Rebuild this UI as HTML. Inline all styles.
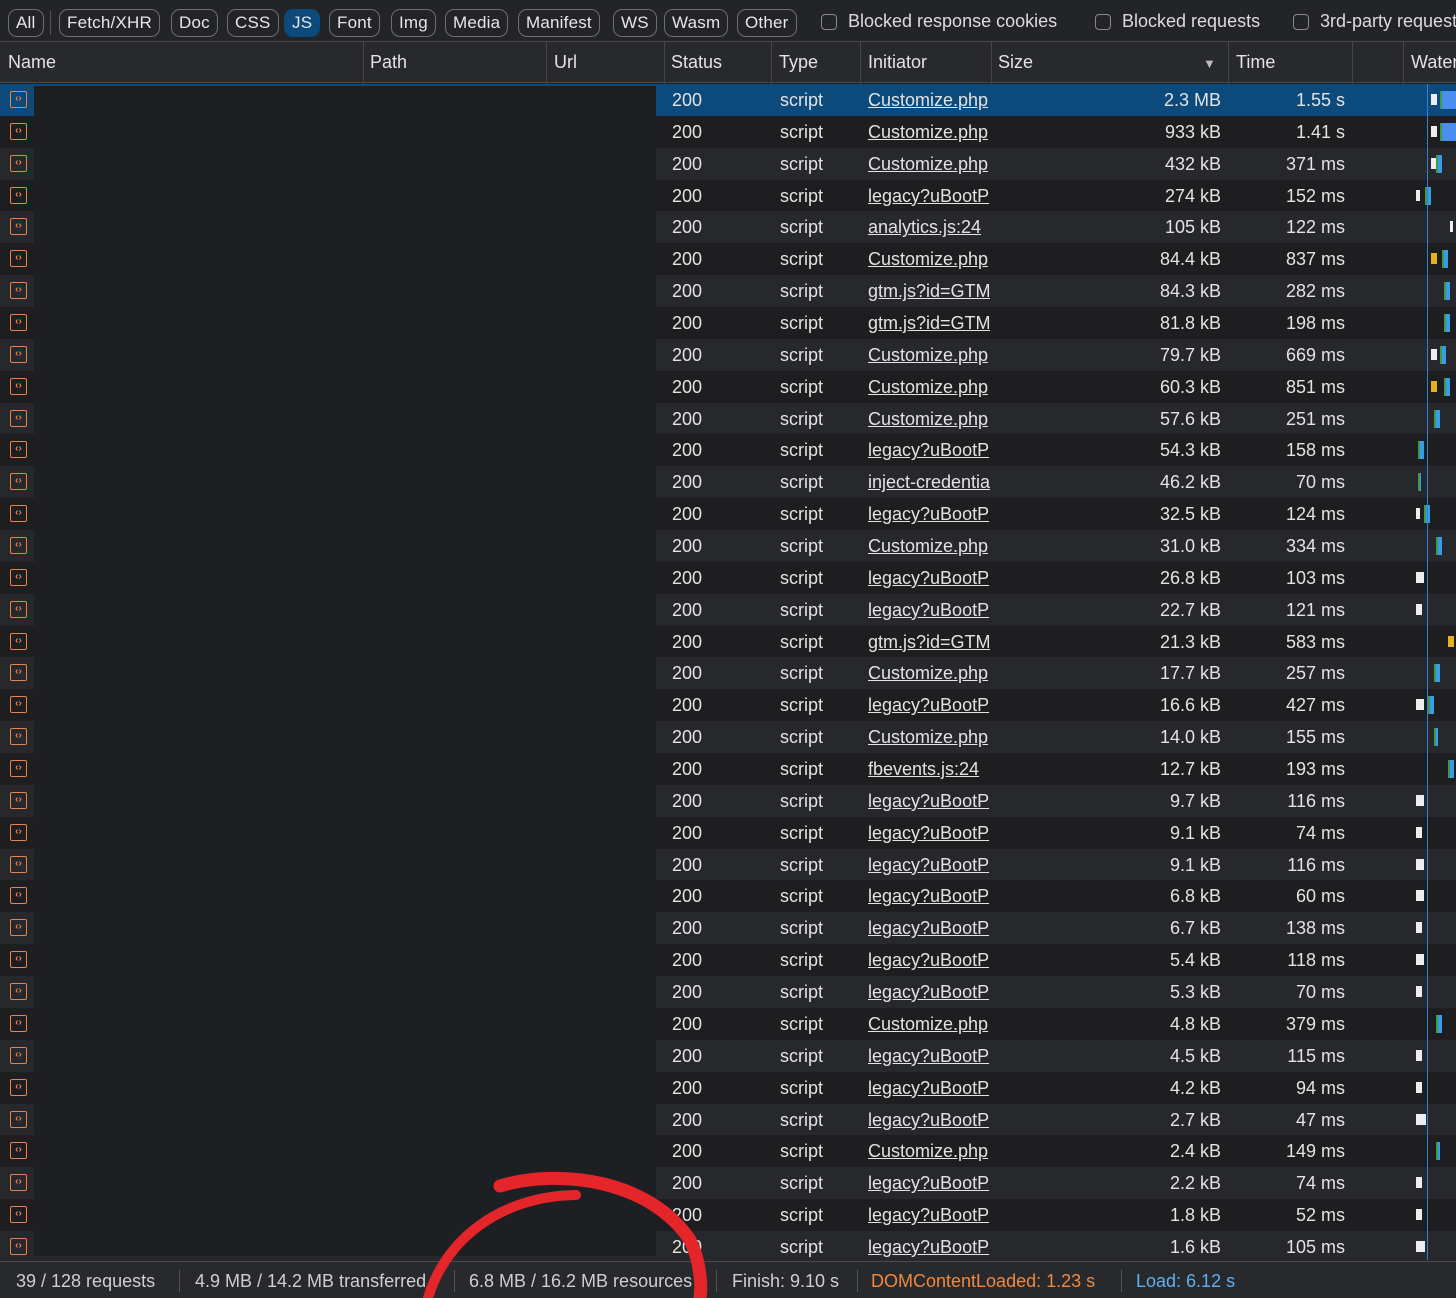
<!DOCTYPE html>
<html><head><meta charset="utf-8"><style>
*{box-sizing:border-box;margin:0;padding:0}
body{width:1456px;height:1298px;background:#1f2023;font-family:"Liberation Sans",sans-serif;color:#e3e3e3;overflow:hidden;position:relative;font-size:18px}
.tb{position:absolute;left:0;top:0;width:1456px;height:42px;background:#232427;border-bottom:1px solid #4a4a4a;overflow:hidden;white-space:nowrap}
.btn{position:absolute;top:9px;height:28px;border:1.5px solid #6f6f6f;border-radius:9px;padding:0 7px;line-height:25px;font-size:17px;color:#e6e6e6;letter-spacing:0.2px}
.btn.on{background:#0b4a7b;border-color:#0b4a7b}
.cb{position:absolute;top:14px;width:16px;height:16px;border:1.5px solid #8a8a8a;border-radius:4px}
.cbt{position:absolute;top:11px;font-size:18px;color:#dcdcdc;white-space:nowrap}
.hd{position:absolute;left:0;top:42px;width:1456px;height:41px;background:#28292c;border-bottom:1px solid #4a4a4a}
.hd span{position:absolute;top:10px;font-size:18px}
.vl{position:absolute;top:42px;bottom:40px;width:1px;background:#444}
.rows{position:absolute;left:0;top:84px;width:1456px}
.r{height:31.86px;position:relative;background:#1e1e20}
.r:nth-child(odd){background:#27282b}
.r.sel{background:#0b4a7b}
.r span{position:absolute;top:6px;font-size:18px;white-space:nowrap}
.ic{position:absolute;left:10px;top:7px;width:17px;height:17px;border:1.5px solid #e8834a;border-radius:2px;color:#e8834a;font-size:10px;line-height:13px;text-align:center;font-weight:bold}
.s{left:672px}.t{left:780px}
.i{left:868px;width:122px;overflow:hidden;text-decoration:underline}
.z{right:235px;text-align:right}.tm{right:111px;text-align:right}
.w1{position:absolute;top:10px;width:6px;height:11px;background:#eee}
.w2{position:absolute;top:7px;width:6px;height:18px;background:#3a9be8;border-left:2px solid #3c9a4a}
.cover{position:absolute;left:34px;top:86px;width:622px;height:1170px;background:#1e1f22}
.ft{position:absolute;left:0;top:1261px;width:1456px;height:37px;background:#28292c;border-top:1px solid #4a4a4a}
.ft span{position:absolute;top:9px;font-size:18px;color:#cfcfcf}
.sep{position:absolute;top:8px;width:1px;height:22px;background:#555}
</style></head><body>
<div class="tb">
<div class="btn" style="left:8px">All</div>
<div style="position:absolute;left:50px;top:11px;width:1px;height:24px;background:#555"></div>
<div class="btn" style="left:59px">Fetch/XHR</div>
<div class="btn" style="left:171px">Doc</div>
<div class="btn" style="left:227px">CSS</div>
<div class="btn on" style="left:284px">JS</div>
<div class="btn" style="left:329px">Font</div>
<div class="btn" style="left:391px">Img</div>
<div class="btn" style="left:445px">Media</div>
<div class="btn" style="left:518px">Manifest</div>
<div class="btn" style="left:613px">WS</div>
<div class="btn" style="left:664px">Wasm</div>
<div class="btn" style="left:737px">Other</div>
<div class="cb" style="left:821px"></div><span class="cbt" style="left:848px">Blocked response cookies</span>
<div class="cb" style="left:1095px"></div><span class="cbt" style="left:1122px">Blocked requests</span>
<div class="cb" style="left:1293px"></div><span class="cbt" style="left:1320px">3rd-party requests</span>
</div>
<div class="hd">
<span style="left:8px">Name</span><span style="left:370px">Path</span><span style="left:554px">Url</span><span style="left:671px">Status</span><span style="left:779px">Type</span><span style="left:868px">Initiator</span><span style="left:998px">Size</span><span style="left:1203px;top:14px;font-size:13px;color:#bbb">▼</span><span style="left:1236px">Time</span><span style="left:1411px">Waterfall</span>
</div>
<div class="vl" style="left:363px"></div><div class="vl" style="left:546px"></div><div class="vl" style="left:664px"></div><div class="vl" style="left:771px"></div><div class="vl" style="left:860px"></div><div class="vl" style="left:991px"></div><div class="vl" style="left:1228px"></div><div class="vl" style="left:1352px"></div><div class="vl" style="left:1403px"></div>
<div class="rows">
<div class="r sel"><div class="ic">‹›</div><span class="s">200</span><span class="t">script</span><span class="i">Customize.php</span><span class="z">2.3 MB</span><span class="tm">1.55 s</span><div class="w1" style="left:1431px"></div><div class="w2" style="left:1440px;width:16px;background:#4a8ff0"></div></div>
<div class="r"><div class="ic">‹›</div><span class="s">200</span><span class="t">script</span><span class="i">Customize.php</span><span class="z">933 kB</span><span class="tm">1.41 s</span><div class="w1" style="left:1431px"></div><div class="w2" style="left:1440px;width:16px;background:#4a8ff0"></div></div>
<div class="r"><div class="ic">‹›</div><span class="s">200</span><span class="t">script</span><span class="i">Customize.php</span><span class="z">432 kB</span><span class="tm">371 ms</span><div class="w1" style="left:1431px"></div><div class="w2" style="left:1436px"></div></div>
<div class="r"><div class="ic">‹›</div><span class="s">200</span><span class="t">script</span><span class="i">legacy?uBootP</span><span class="z">274 kB</span><span class="tm">152 ms</span><div class="w1" style="left:1416px;width:4px"></div><div class="w2" style="left:1425px"></div></div>
<div class="r"><div class="ic">‹›</div><span class="s">200</span><span class="t">script</span><span class="i">analytics.js:24</span><span class="z">105 kB</span><span class="tm">122 ms</span><div class="w1" style="left:1450px;width:3px"></div></div>
<div class="r"><div class="ic">‹›</div><span class="s">200</span><span class="t">script</span><span class="i">Customize.php</span><span class="z">84.4 kB</span><span class="tm">837 ms</span><div class="w1" style="left:1431px;background:#e8b020"></div><div class="w2" style="left:1442px"></div></div>
<div class="r"><div class="ic">‹›</div><span class="s">200</span><span class="t">script</span><span class="i">gtm.js?id=GTM</span><span class="z">84.3 kB</span><span class="tm">282 ms</span><div class="w2" style="left:1444px"></div></div>
<div class="r"><div class="ic">‹›</div><span class="s">200</span><span class="t">script</span><span class="i">gtm.js?id=GTM</span><span class="z">81.8 kB</span><span class="tm">198 ms</span><div class="w2" style="left:1444px"></div></div>
<div class="r"><div class="ic">‹›</div><span class="s">200</span><span class="t">script</span><span class="i">Customize.php</span><span class="z">79.7 kB</span><span class="tm">669 ms</span><div class="w1" style="left:1431px"></div><div class="w2" style="left:1440px"></div></div>
<div class="r"><div class="ic">‹›</div><span class="s">200</span><span class="t">script</span><span class="i">Customize.php</span><span class="z">60.3 kB</span><span class="tm">851 ms</span><div class="w1" style="left:1431px;background:#e8b020"></div><div class="w2" style="left:1444px"></div></div>
<div class="r"><div class="ic">‹›</div><span class="s">200</span><span class="t">script</span><span class="i">Customize.php</span><span class="z">57.6 kB</span><span class="tm">251 ms</span><div class="w2" style="left:1434px"></div></div>
<div class="r"><div class="ic">‹›</div><span class="s">200</span><span class="t">script</span><span class="i">legacy?uBootP</span><span class="z">54.3 kB</span><span class="tm">158 ms</span><div class="w2" style="left:1418px"></div></div>
<div class="r"><div class="ic">‹›</div><span class="s">200</span><span class="t">script</span><span class="i">inject-credentials</span><span class="z">46.2 kB</span><span class="tm">70 ms</span><div class="w2" style="left:1418px;width:3px"></div></div>
<div class="r"><div class="ic">‹›</div><span class="s">200</span><span class="t">script</span><span class="i">legacy?uBootP</span><span class="z">32.5 kB</span><span class="tm">124 ms</span><div class="w1" style="left:1416px;width:4px"></div><div class="w2" style="left:1424px"></div></div>
<div class="r"><div class="ic">‹›</div><span class="s">200</span><span class="t">script</span><span class="i">Customize.php</span><span class="z">31.0 kB</span><span class="tm">334 ms</span><div class="w2" style="left:1436px"></div></div>
<div class="r"><div class="ic">‹›</div><span class="s">200</span><span class="t">script</span><span class="i">legacy?uBootP</span><span class="z">26.8 kB</span><span class="tm">103 ms</span><div class="w1" style="left:1416px;width:8px"></div></div>
<div class="r"><div class="ic">‹›</div><span class="s">200</span><span class="t">script</span><span class="i">legacy?uBootP</span><span class="z">22.7 kB</span><span class="tm">121 ms</span><div class="w1" style="left:1416px"></div></div>
<div class="r"><div class="ic">‹›</div><span class="s">200</span><span class="t">script</span><span class="i">gtm.js?id=GTM</span><span class="z">21.3 kB</span><span class="tm">583 ms</span><div class="w1" style="left:1448px;background:#e8b020"></div></div>
<div class="r"><div class="ic">‹›</div><span class="s">200</span><span class="t">script</span><span class="i">Customize.php</span><span class="z">17.7 kB</span><span class="tm">257 ms</span><div class="w2" style="left:1434px"></div></div>
<div class="r"><div class="ic">‹›</div><span class="s">200</span><span class="t">script</span><span class="i">legacy?uBootP</span><span class="z">16.6 kB</span><span class="tm">427 ms</span><div class="w1" style="left:1416px;width:8px"></div><div class="w2" style="left:1428px"></div></div>
<div class="r"><div class="ic">‹›</div><span class="s">200</span><span class="t">script</span><span class="i">Customize.php</span><span class="z">14.0 kB</span><span class="tm">155 ms</span><div class="w2" style="left:1434px;width:4px"></div></div>
<div class="r"><div class="ic">‹›</div><span class="s">200</span><span class="t">script</span><span class="i">fbevents.js:24</span><span class="z">12.7 kB</span><span class="tm">193 ms</span><div class="w2" style="left:1448px"></div></div>
<div class="r"><div class="ic">‹›</div><span class="s">200</span><span class="t">script</span><span class="i">legacy?uBootP</span><span class="z">9.7 kB</span><span class="tm">116 ms</span><div class="w1" style="left:1416px;width:8px"></div></div>
<div class="r"><div class="ic">‹›</div><span class="s">200</span><span class="t">script</span><span class="i">legacy?uBootP</span><span class="z">9.1 kB</span><span class="tm">74 ms</span><div class="w1" style="left:1416px"></div></div>
<div class="r"><div class="ic">‹›</div><span class="s">200</span><span class="t">script</span><span class="i">legacy?uBootP</span><span class="z">9.1 kB</span><span class="tm">116 ms</span><div class="w1" style="left:1416px;width:8px"></div></div>
<div class="r"><div class="ic">‹›</div><span class="s">200</span><span class="t">script</span><span class="i">legacy?uBootP</span><span class="z">6.8 kB</span><span class="tm">60 ms</span><div class="w1" style="left:1416px;width:8px"></div></div>
<div class="r"><div class="ic">‹›</div><span class="s">200</span><span class="t">script</span><span class="i">legacy?uBootP</span><span class="z">6.7 kB</span><span class="tm">138 ms</span><div class="w1" style="left:1416px"></div></div>
<div class="r"><div class="ic">‹›</div><span class="s">200</span><span class="t">script</span><span class="i">legacy?uBootP</span><span class="z">5.4 kB</span><span class="tm">118 ms</span><div class="w1" style="left:1416px;width:8px"></div></div>
<div class="r"><div class="ic">‹›</div><span class="s">200</span><span class="t">script</span><span class="i">legacy?uBootP</span><span class="z">5.3 kB</span><span class="tm">70 ms</span><div class="w1" style="left:1416px"></div></div>
<div class="r"><div class="ic">‹›</div><span class="s">200</span><span class="t">script</span><span class="i">Customize.php</span><span class="z">4.8 kB</span><span class="tm">379 ms</span><div class="w2" style="left:1436px"></div></div>
<div class="r"><div class="ic">‹›</div><span class="s">200</span><span class="t">script</span><span class="i">legacy?uBootP</span><span class="z">4.5 kB</span><span class="tm">115 ms</span><div class="w1" style="left:1416px"></div></div>
<div class="r"><div class="ic">‹›</div><span class="s">200</span><span class="t">script</span><span class="i">legacy?uBootP</span><span class="z">4.2 kB</span><span class="tm">94 ms</span><div class="w1" style="left:1416px"></div></div>
<div class="r"><div class="ic">‹›</div><span class="s">200</span><span class="t">script</span><span class="i">legacy?uBootP</span><span class="z">2.7 kB</span><span class="tm">47 ms</span><div class="w1" style="left:1416px;width:10px"></div></div>
<div class="r"><div class="ic">‹›</div><span class="s">200</span><span class="t">script</span><span class="i">Customize.php</span><span class="z">2.4 kB</span><span class="tm">149 ms</span><div class="w2" style="left:1436px;width:4px"></div></div>
<div class="r"><div class="ic">‹›</div><span class="s">200</span><span class="t">script</span><span class="i">legacy?uBootP</span><span class="z">2.2 kB</span><span class="tm">74 ms</span><div class="w1" style="left:1416px"></div></div>
<div class="r"><div class="ic">‹›</div><span class="s">200</span><span class="t">script</span><span class="i">legacy?uBootP</span><span class="z">1.8 kB</span><span class="tm">52 ms</span><div class="w1" style="left:1416px"></div></div>
<div class="r"><div class="ic">‹›</div><span class="s">200</span><span class="t">script</span><span class="i">legacy?uBootP</span><span class="z">1.6 kB</span><span class="tm">105 ms</span><div class="w1" style="left:1416px;width:9px"></div></div>
</div>
<div style="position:absolute;left:1427px;top:84px;width:1px;height:1176px;background:#2f7fd8"></div>
<div class="cover"></div>
<div class="ft">
<span style="left:16px">39 / 128 requests</span><div class="sep" style="left:179px"></div>
<span style="left:195px">4.9 MB / 14.2 MB transferred</span><div class="sep" style="left:454px"></div>
<span style="left:469px">6.8 MB / 16.2 MB resources</span><div class="sep" style="left:716px"></div>
<span style="left:732px">Finish: 9.10 s</span><div class="sep" style="left:857px"></div>
<span style="left:871px;color:#f0883e">DOMContentLoaded: 1.23 s</span><div class="sep" style="left:1121px"></div>
<span style="left:1136px;color:#5fb0f0">Load: 6.12 s</span>
</div>
<svg style="position:absolute;left:0;top:0" width="1456" height="1298">
<path d="M500 1186 C560 1168 650 1180 690 1240 C700 1260 702 1285 700 1298" fill="none" stroke="#e4262b" stroke-width="13" stroke-linecap="round"/>
<path d="M576 1195 C500 1196 445 1240 428 1298" fill="none" stroke="#e4262b" stroke-width="10" stroke-linecap="round"/>
</svg>
</body></html>
